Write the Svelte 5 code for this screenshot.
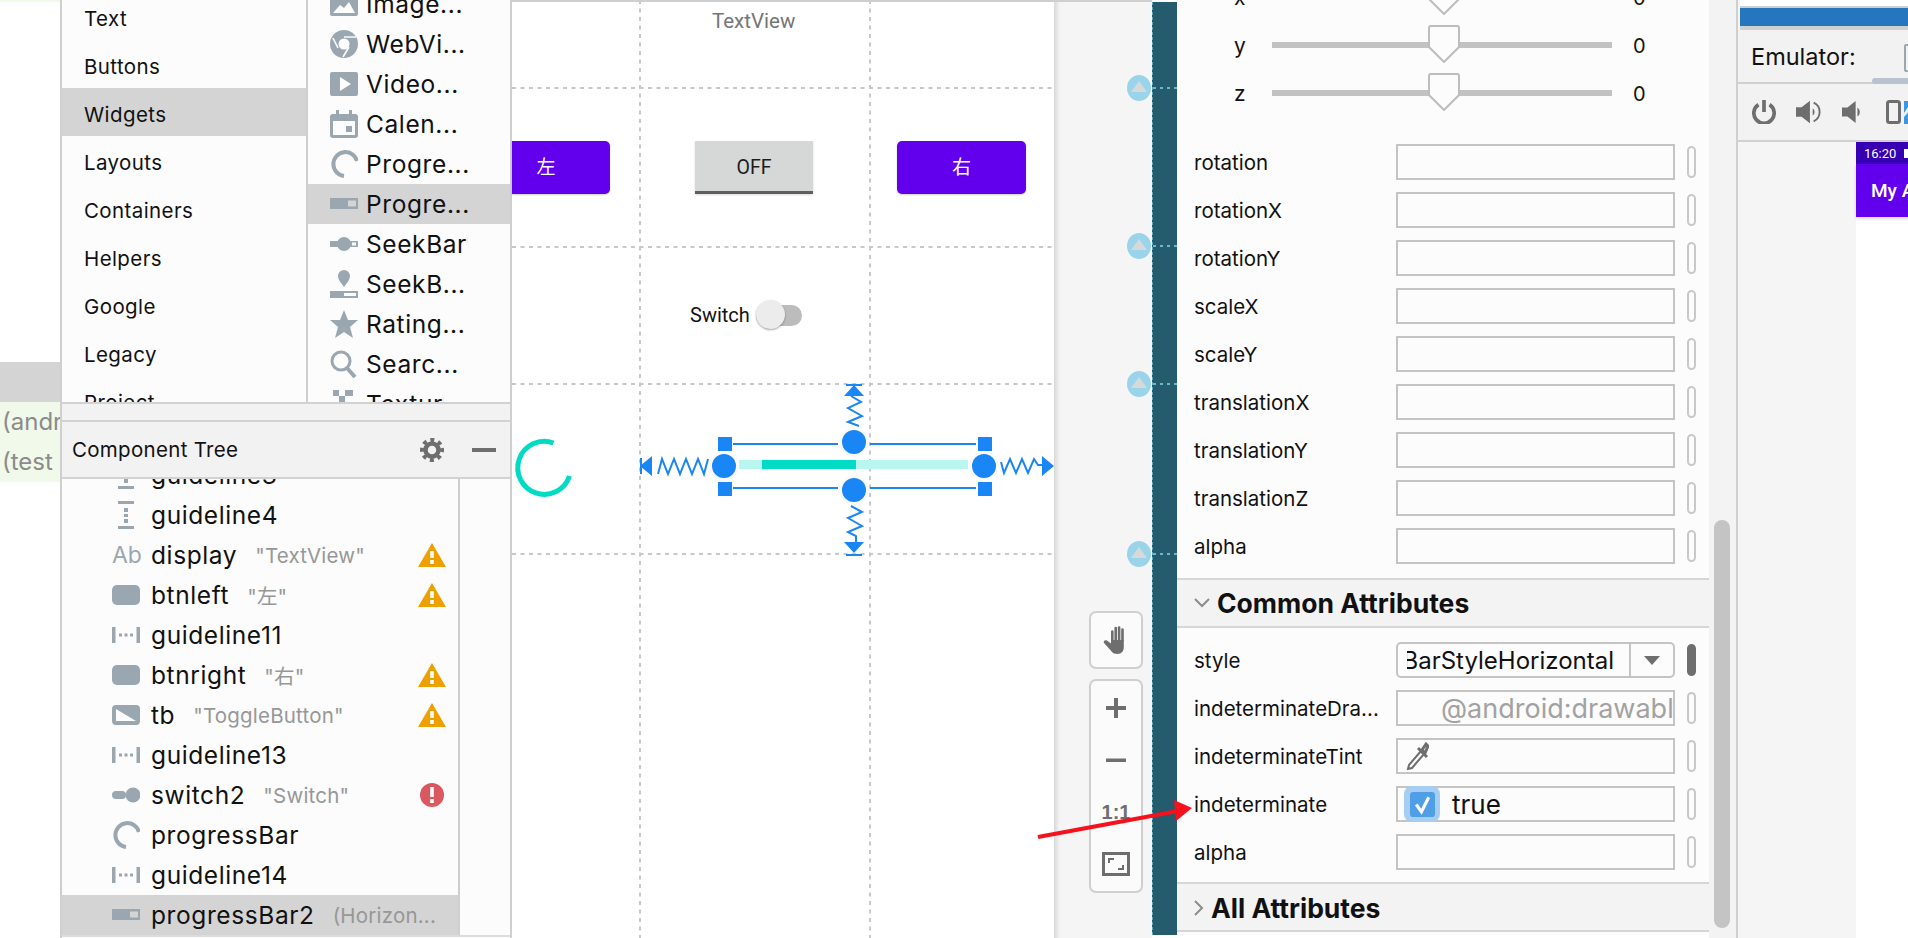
<script>
  const categories = ['Text', 'Buttons', 'Widgets', 'Layouts', 'Containers', 'Helpers', 'Google', 'Legacy', 'Project'];
  const widgets = [
    ['image', 'Image...'], ['web', 'WebVi...'], ['video', 'Video...'], ['calendar', 'Calen...'], ['spin', 'Progre...'],
    ['hbar', 'Progre...'], ['seek', 'SeekBar'], ['seekd', 'SeekB...'], ['star', 'Rating...'], ['search', 'Searc...'], ['texture', 'Textur...'],
  ];
  const tree = [
    ['guidev', 'guideline3', '', ''],
    ['guidev', 'guideline4', '', ''],
    ['ab', 'display', '"TextView"', 'warn'],
    ['btn', 'btnleft', '"左"', 'warn'],
    ['guideh', 'guideline11', '', ''],
    ['btn', 'btnright', '"右"', 'warn'],
    ['toggle', 'tb', '"ToggleButton"', 'warn'],
    ['guideh', 'guideline13', '', ''],
    ['switch', 'switch2', '"Switch"', 'error'],
    ['spin', 'progressBar', '', ''],
    ['guideh', 'guideline14', '', ''],
    ['hbar', 'progressBar2', '(Horizon...', ''],
  ];
  const sliders = ['x', 'y', 'z'];
  const transforms = ['rotation', 'rotationX', 'rotationY', 'scaleX', 'scaleY', 'translationX', 'translationY', 'translationZ', 'alpha'];
  const markers = [88, 246, 384, 554];
</script>

{#snippet icon(name)}
  <svg class="ico" viewBox="0 0 28 28" fill="#9aa7b0">
    {#if name === 'image'}
      <path d="M2 2h24a2 2 0 0 1 2 2v20a2 2 0 0 1-2 2H2a2 2 0 0 1-2-2V4a2 2 0 0 1 2-2zM3 23h22l-6-11-5 6-4-3z" fill-rule="evenodd" />
    {:else if name === 'web'}
      <circle cx="14" cy="14" r="14" />
      <circle cx="14" cy="14" r="5.5" fill="#fcfcfc" />
      <path d="M14 7h12M8 18L3 8M19 17l-6 10" stroke="#fcfcfc" stroke-width="1.6" fill="none" />
    {:else if name === 'video'}
      <path d="M2 2h24a2 2 0 0 1 2 2v20a2 2 0 0 1-2 2H2a2 2 0 0 1-2-2V4a2 2 0 0 1 2-2zM10 7v14l11-7z" fill-rule="evenodd" />
    {:else if name === 'calendar'}
      <path d="M6 0h3v4h10V0h3v4h3a3 3 0 0 1 3 3v18a3 3 0 0 1-3 3H3a3 3 0 0 1-3-3V7a3 3 0 0 1 3-3h3zM3 11v14h22V11z" fill-rule="evenodd" />
      <rect x="16" y="16" width="6" height="6" />
    {:else if name === 'spin'}
      <path d="M27 11A12 12 0 1 0 14 26" fill="none" stroke="#9aa7b0" stroke-width="4" />
    {:else if name === 'hbar'}
      <path d="M0 8h28v11H0zM18 10.500v6h8v-6z" fill-rule="evenodd" />
    {:else if name === 'seek'}
      <path d="M0 11h8v6H0zM20 11h8v6h-8zM22 12.500v3h4v-3z" fill-rule="evenodd" />
      <circle cx="14" cy="14" r="7" />
    {:else if name === 'seekd'}
      <path d="M14 0a6 6 0 0 1 6 6c0 4-4 8-6 11-2-3-6-7-6-11a6 6 0 0 1 6-6z" />
      <path d="M0 21h28v7H0zM14 23v3h12v-3z" fill-rule="evenodd" />
    {:else if name === 'star'}
      <path d="M14 0l4 10h10l-8 7 3 11-9-6-9 6 3-11-8-7h10z" />
    {:else if name === 'search'}
      <circle cx="11" cy="11" r="9" fill="none" stroke="#9aa7b0" stroke-width="3" />
      <path d="M17 18l8 9" stroke="#9aa7b0" stroke-width="4" />
    {:else if name === 'texture'}
      <path d="M3 0h6v6H3zM15 0h8v6h-8zM9 6h6v6H9z" />
    {:else if name === 'guidev'}
      <path d="M6 0h16v3H6zM6 25h16v3H6zM12 7h4v4h-4zM12 13h4v3h-4zM12 18h4v4h-4z" />
    {:else if name === 'guideh'}
      <path d="M0 6h3.500v16H0zM24.500 6H28v16h-3.500zM7 12.500h3v3H7zM12.500 12.500h3v3h-3zM18 12.500h3v3h-3z" />
    {:else if name === 'btn'}
      <rect x="0" y="4" width="28" height="20" rx="5" />
    {:else if name === 'toggle'}
      <path d="M4 4h20a4 4 0 0 1 4 4v12a4 4 0 0 1-4 4H4a4 4 0 0 1-4-4V8a4 4 0 0 1 4-4zM4 8v12h20z" fill-rule="evenodd" />
    {:else if name === 'switch'}
      <rect x="0" y="10" width="14" height="8" rx="4" />
      <circle cx="21" cy="14" r="7.500" />
    {/if}
  </svg>
{/snippet}

<div class="app">
  <div class="sliver">
    <div class="sel"></div>
    <div class="diff">
      <span>(andr</span>
      <span>(test</span>
    </div>
  </div>

  <div class="left">
    <div class="palette">
      <div class="cats">
        {#each categories as c}
          <div class="cat" class:on={c === 'Widgets'}>{c}</div>
        {/each}
      </div>
      <div class="widgets">
        {#each widgets as w, i}
          <div class="widget" class:on={i === 5}>
            {@render icon(w[0])}
            <span>{w[1]}</span>
          </div>
        {/each}
      </div>
    </div>
    <div class="strip"></div>
    <div class="tree-head">
      <span>Component Tree</span>
      <svg class="gear" viewBox="0 0 24 24" fill="none" stroke="#6e6e6e">
        <circle cx="12" cy="12" r="6.500" stroke-width="4.500" />
        <circle cx="12" cy="12" r="10" stroke-width="4" stroke-dasharray="3.900 3.950" transform="rotate(-11 12 12)" />
      </svg>
      <i class="dash"></i>
    </div>
    <div class="tree-wrap">
      <div class="tree">
        {#each tree as t, i}
          <div class="node" class:on={i === 11}>
            {#if t[0] === 'ab'}
              <b class="ab">Ab</b>
            {:else}
              {@render icon(t[0])}
            {/if}
            <span class="name">{t[1]}</span>
            {#if t[2]}<span class="hint">{t[2]}</span>{/if}
            {#if t[3] === 'warn'}
              <svg class="status" viewBox="0 0 28 24">
                <path d="M14 0l14 24H0z" fill="#eea000" />
                <path d="M12.200 8h3.600v7h-3.600zM12.200 17h3.600v4h-3.600z" fill="#fff" />
              </svg>
            {:else if t[3] === 'error'}
              <svg class="status" viewBox="0 0 28 24">
                <circle cx="14" cy="12" r="12" fill="#db5860" />
                <path d="M12.200 4h3.600v10h-3.600zM12.200 16h3.600v4h-3.600z" fill="#fff" />
              </svg>
            {/if}
          </div>
        {/each}
      </div>
    </div>
  </div>

  <div class="canvas">
    <svg class="overlay" viewBox="512 0 542 938">
      <g stroke="#c8c8c8" stroke-width="2" stroke-dasharray="4 4.500">
        <path d="M640 0V938M870 0V938" />
        <path d="M512 88H1054M512 247H1054M512 384H1054M512 554H1054" />
      </g>
      <path d="M553.500 443A26.500 26.500 0 1 0 569.500 476" fill="none" stroke="#00dbc6" stroke-width="5" />
      <rect x="739" y="460" width="229" height="9" fill="#b9f6ef" />
      <rect x="762" y="460" width="94" height="9" fill="#00dbc6" />
      <g stroke="#1a86f5" fill="none" stroke-width="2">
        <path d="M733 444H838M870 444H976M733 488H838M870 488H976" />
        <path d="M708 459l-4 15-6-15-6 15-6-15-6 15-6-15-6 15-6-15-4 15" />
        <path d="M1001 462l3 11 6-14 6 14 6-14 6 14 6-14 4 6h8" />
        <path d="M851 396l10 6-13 6 14 8-14 6 11 4" />
        <path d="M851 506l11 6-14 6 14 8-14 6 8 4v6" />
        <path d="M846 385h16M846 555h16M641 458v16" />
      </g>
      <g fill="#1a86f5">
        <rect x="718" y="437" width="14" height="14" />
        <rect x="978" y="437" width="14" height="14" />
        <rect x="718" y="482" width="14" height="14" />
        <rect x="978" y="482" width="14" height="14" />
        <path d="M640 466l12-10v20zM1054 466l-12-10v20zM854 385l10 11h-20zM854 553l10-11h-20z" />
      </g>
      <g fill="#1a86f5" stroke="#fafafa" stroke-width="3">
        <circle cx="724" cy="466" r="13.500" />
        <circle cx="984" cy="466" r="13.500" />
        <circle cx="854" cy="442" r="13.500" />
        <circle cx="854" cy="490" r="13.500" />
      </g>
    </svg>
    <div class="tv">TextView</div>
    <div class="mbtn lbtn">左</div>
    <div class="toggle">OFF</div>
    <div class="mbtn rbtn">右</div>
    <div class="sw">
      <span>Switch</span>
      <div class="track"><i></i></div>
    </div>
  </div>

  <div class="rail">
    {#each markers as y}
      <svg class="marker" style="top:{y - 13}px" viewBox="0 0 24 26">
        <ellipse cx="12" cy="13" rx="12" ry="13" fill="#9ad4ea" />
        <path d="M12 6l8 11H4z" fill="#d6d9da" />
      </svg>
    {/each}
    <div class="tools hand">
      <svg viewBox="0 0 26 28" width="26" height="28" fill="#6e6e6e">
        <path d="M8 15V5.500a1.300 1.300 0 0 1 2.600 0V15zM11.400 15V2a1.300 1.300 0 0 1 2.600 0v13zM14.800 15V1.500a1.300 1.300 0 0 1 2.600 0V15zM18.200 15V3.500a1.300 1.300 0 0 1 2.600 0V15z" />
        <path d="M8 14h12.800v7c0 4-2 7-6.500 7-3 0-5-1-6.500-3.500L1 17c-1-2 1-3.500 3-2.500l4 3z" />
      </svg>
    </div>
    <div class="tools zoom">
      <svg viewBox="0 0 24 24" width="24" height="24" fill="#6e6e6e"><path d="M10 2h4v8h8v4h-8v8h-4v-8H2v-4h8z" /></svg>
      <svg viewBox="0 0 24 24" width="24" height="24" fill="#6e6e6e"><path d="M2 10.500h20v3.500H2z" /></svg>
      <b>1:1</b>
      <svg viewBox="0 0 28 24" width="28" height="24" fill="none" stroke="#6e6e6e" stroke-width="3">
        <rect x="1.500" y="1.500" width="25" height="21" />
        <path d="M7 11V7h5M21 13v4h-5" stroke-width="2" />
      </svg>
    </div>
  </div>

  <div class="teal">
    {#each markers as y}
      <i style="top:{y - 1}px"></i>
    {/each}
  </div>

  <div class="attrs">
    <div class="sliders">
      {#each sliders as s}
        <div class="slider">
          <span class="axis">{s}</span>
          <div class="rule">
            <svg class="thumb" viewBox="0 0 32 38">
              <path d="M3 1h26a2 2 0 0 1 2 2v19L16 37 1 22V3a2 2 0 0 1 2-2z" fill="#fcfcfc" stroke="#bdbdbd" stroke-width="2" />
            </svg>
          </div>
          <span class="val">0</span>
        </div>
      {/each}
    </div>

    <div class="group">
      {#each transforms as name}
        <div class="row">
          <span class="lbl">{name}</span>
          <div class="field"></div>
          <i class="pill"></i>
        </div>
      {/each}
    </div>

    <div class="sec first">
      <svg viewBox="0 0 16 10" width="16" height="10" fill="none" stroke="#8c8c8c" stroke-width="2"><path d="M1 1l7 7 7-7" /></svg>
      <span>Common Attributes</span>
    </div>

    <div class="group common">
      <div class="row">
        <span class="lbl">style</span>
        <div class="field combo">
          <div class="clip"><span>progressBarStyleHorizontal</span></div>
          <div class="drop"><i></i></div>
        </div>
        <i class="pill fill"></i>
      </div>
      <div class="row">
        <span class="lbl">indeterminateDra...</span>
        <div class="field ghost">@android:drawable/progress_indeterminate</div>
        <i class="pill"></i>
      </div>
      <div class="row">
        <span class="lbl">indeterminateTint</span>
        <div class="field picker">
          <svg viewBox="0 0 24 30" width="24" height="30" fill="none" stroke="#6e6e6e">
            <path d="M16 10L4 24l-1 4 4-1 12-14z" stroke-width="2" />
            <path d="M13 7l9 9M17 9l4-6 2 2-3 7z" stroke-width="3" />
          </svg>
        </div>
        <i class="pill"></i>
      </div>
      <div class="row">
        <span class="lbl">indeterminate</span>
        <div class="field check">
          <div class="halo">
            <svg viewBox="0 0 24 24" width="25" height="25">
              <rect width="24" height="24" rx="3" fill="#4f9fe6" />
              <path d="M6 12l5 7 7-14" fill="none" stroke="#fff" stroke-width="3" />
            </svg>
          </div>
          <span>true</span>
        </div>
        <i class="pill"></i>
      </div>
      <div class="row">
        <span class="lbl">alpha</span>
        <div class="field"></div>
        <i class="pill"></i>
      </div>
    </div>

    <div class="sec">
      <svg viewBox="0 0 10 16" width="10" height="18" fill="none" stroke="#8c8c8c" stroke-width="2"><path d="M1 1l7 7-7 7" /></svg>
      <span>All Attributes</span>
    </div>
  </div>

  <div class="scrollstrip"><i></i></div>

  <div class="emu">
    <div class="emu-top"></div>
    <div class="emu-blue"></div>
    <div class="emu-head">
      <span>Emulator:</span>
      <i class="tab"></i>
      <i class="hscroll"></i>
    </div>
    <div class="emu-tools">
      <svg viewBox="0 0 26 26" width="24" height="24" fill="none" stroke="#6e6e6e" stroke-width="4">
        <path d="M13 0v13M7 5a11 11 0 1 0 12 0" />
      </svg>
      <svg viewBox="0 0 28 24" width="26" height="24" fill="#6e6e6e">
        <path d="M0 7h6l9-7v24l-9-7H0z" />
        <path d="M19 2a11 11 0 0 1 0 20" stroke="#6e6e6e" stroke-width="2" fill="none" />
        <path d="M18 8a5 5 0 0 1 0 8z" />
      </svg>
      <svg viewBox="0 0 22 24" width="20" height="24" fill="#6e6e6e">
        <path d="M0 7h6l9-7v24l-9-7H0z" />
        <path d="M17 7a6 6 0 0 1 0 10z" />
      </svg>
      <svg class="rot" viewBox="0 0 40 24" width="40" height="24">
        <rect x="1.500" y="1.500" width="12" height="21" rx="2" fill="none" stroke="#6e6e6e" stroke-width="3" />
        <path d="M18 13L26 1h-8zM18 24V17L26 8v16z" fill="#3b97e3" />
      </svg>
    </div>
    <div class="stage">
      <div class="phone">
        <div class="status-bar"><span>16:20</span><i></i></div>
        <div class="app-bar">My App</div>
      </div>
    </div>
  </div>

  <svg class="arrow" viewBox="0 0 1908 938">
    <path d="M1038 837L1178 811" stroke="#f5121d" stroke-width="4" />
    <path d="M1192 808L1174 800L1176 821z" fill="#f5121d" />
  </svg>
</div>

<style>
  :global(body) {
    margin: 0;
    background: #fff;
  }
  .app {
    position: relative;
    display: flex;
    width: 1908px;
    height: 938px;
    overflow: hidden;
    font-family: Inter, "Noto Sans CJK SC", sans-serif;
    color: #111;
    background: #fff;
  }
  .sliver {
    width: 60px;
    flex: none;
    padding-top: 360px;
    box-sizing: border-box;
    border-top: 2px solid #f1f9e9;
    overflow: hidden;
  }
  .sel {
    height: 40px;
    background: #d4d4d4;
  }
  .diff {
    height: 80px;
    background: #f1f9ea;
    color: #8b8b8b;
    font-size: 24px;
    overflow: hidden;
    white-space: nowrap;
  }
  .diff span {
    display: block;
    height: 40px;
    line-height: 40px;
    padding-left: 2px;
  }
  .left {
    width: 452px;
    flex: none;
    box-sizing: border-box;
    border-left: 2px solid #cfcfcf;
    border-right: 2px solid #cfcfcf;
    background: #fcfcfc;
    display: flex;
    flex-direction: column;
  }
  .palette {
    height: 402px;
    display: flex;
    overflow: hidden;
    flex: none;
  }
  .cats {
    width: 244px;
    flex: none;
    border-right: 2px solid #cfcfcf;
    margin-top: -8px;
  }
  .cat {
    height: 48px;
    line-height: 53px;
    padding-left: 22px;
    font-size: 20.500px;
    letter-spacing: 0.4px;
  }
  .on {
    background: #d4d4d4;
  }
  .widgets {
    flex: 1;
    margin-top: -16px;
  }
  .widget {
    height: 40px;
    display: flex;
    align-items: center;
    padding-left: 22px;
    gap: 8px;
    font-size: 24.500px;
    letter-spacing: 0.6px;
    white-space: nowrap;
  }
  .ico {
    width: 28px;
    height: 28px;
    flex: none;
  }
  .strip {
    height: 16px;
    flex: none;
    background: #f2f2f2;
    border-top: 2px solid #d2d2d2;
    border-bottom: 2px solid #d2d2d2;
  }
  .tree-head {
    height: 57px;
    flex: none;
    box-sizing: border-box;
    background: #f2f2f2;
    border-bottom: 2px solid #d2d2d2;
    display: flex;
    align-items: center;
    padding-left: 10px;
    font-size: 20.500px;
    letter-spacing: 0.3px;
  }
  .gear {
    width: 24px;
    height: 24px;
    margin-left: auto;
  }
  .dash {
    width: 24px;
    height: 4px;
    background: #6e6e6e;
    margin: 0 14px 0 28px;
  }
  .tree-wrap {
    height: 456px;
    flex: none;
    overflow: hidden;
    border-bottom: 2px solid #dcdcdc;
  }
  .tree {
    width: 396px;
    height: 456px;
    border-right: 2px solid #cfcfcf;
  }
  .node {
    height: 40px;
    display: flex;
    align-items: center;
    padding-left: 50px;
    position: relative;
    top: -24px;
    font-size: 24.500px;
    letter-spacing: 0.6px;
    white-space: nowrap;
  }
  .name {
    margin-left: 11px;
  }
  .hint {
    margin-left: 18px;
    color: #979797;
    font-size: 20.500px;
    letter-spacing: 0.2px;
  }
  .ab {
    width: 28px;
    flex: none;
    font-weight: 400;
    color: #9aa7b0;
    font-size: 23px;
    letter-spacing: 0;
  }
  .status {
    position: absolute;
    left: 356px;
    top: 8px;
    width: 28px;
    height: 24px;
  }
  .canvas {
    position: relative;
    width: 542px;
    flex: none;
    box-sizing: border-box;
    background: #fff;
    font-family: Roboto, "Noto Sans CJK SC", sans-serif;
  }
  .canvas::before {
    content: "";
    position: absolute;
    left: 0;
    right: 0;
    top: 0;
    height: 2px;
    background: #cfcfcf;
    z-index: 2;
  }
  .overlay {
    position: absolute;
    inset: 0;
    width: 542px;
    height: 938px;
  }
  .tv {
    position: absolute;
    left: 200px;
    top: 9px;
    font-size: 20.500px;
    color: #757575;
  }
  .mbtn {
    position: absolute;
    top: 141px;
    height: 53px;
    line-height: 53px;
    background: #6200ee;
    color: #fff;
    font-size: 19px;
    text-align: center;
    box-shadow: 0 1px 2px rgba(0, 0, 0, 0.2);
  }
  .lbtn {
    left: 0;
    width: 98px;
    border-radius: 0 5px 5px 0;
    box-sizing: border-box;
    padding-right: 30px;
  }
  .rbtn {
    left: 385px;
    width: 129px;
    border-radius: 5px;
  }
  .toggle {
    position: absolute;
    left: 183px;
    top: 141px;
    width: 118px;
    height: 53px;
    box-sizing: border-box;
    background: #d6d7d7;
    border-bottom: 3px solid #5f5f5f;
    text-align: center;
    line-height: 53px;
    font-size: 19.500px;
    color: #1c1c1c;
    box-shadow: 0 1px 2px rgba(0, 0, 0, 0.15);
  }
  .sw {
    position: absolute;
    left: 178px;
    top: 300px;
    display: flex;
    align-items: center;
    gap: 6px;
    height: 30px;
    font-size: 20px;
  }
  .track {
    position: relative;
    width: 46px;
    height: 21px;
    margin-left: 0;
    border-radius: 11px;
    background: #bcbcbc;
  }
  .track i {
    position: absolute;
    left: 0;
    top: -5px;
    width: 29px;
    height: 29px;
    border-radius: 50%;
    background: #ececec;
    box-shadow: 0 1px 2px rgba(0, 0, 0, 0.35);
  }
  .rail {
    position: relative;
    width: 98px;
    flex: none;
    box-sizing: border-box;
    background: linear-gradient(90deg, #d8d8d8, #f5f5f5 6px);
    border-top: 2px solid #cfcfcf;
    padding: 609px 0 0 35px;
  }
  .marker {
    position: absolute;
    left: 72.500px;
    width: 24px;
    height: 26px;
    margin-top: -2px;
  }
  .tools {
    width: 54px;
    box-sizing: border-box;
    background: #fbfbfb;
    border: 2px solid #cfcfcf;
    border-radius: 7px;
    display: flex;
    flex-direction: column;
    align-items: center;
  }
  .hand {
    height: 58px;
    justify-content: center;
  }
  .zoom {
    height: 214px;
    margin-top: 10px;
    padding: 15px 0 0;
    gap: 28px;
  }
  .zoom b {
    height: 24px;
    line-height: 24px;
    font-size: 20px;
    color: #6e6e6e;
    font-family: "Liberation Sans", sans-serif;
  }
  .teal {
    position: relative;
    width: 25px;
    flex: none;
    margin: 2px 0 3px;
    box-sizing: border-box;
    background: #245b6d;
    border-left: 1px dashed #5fa8bc;
  }
  .teal i {
    position: absolute;
    left: 0;
    right: 0;
    margin-top: -2px;
    height: 2px;
    background: repeating-linear-gradient(90deg, #6cb7cb 0 3px, transparent 3px 7px);
  }
  .attrs {
    width: 532px;
    flex: none;
    height: 935px;
    background: #fcfcfc;
    overflow: hidden;
    font-size: 20.500px;
  }
  .sliders {
    margin-top: -27px;
  }
  .slider {
    height: 48px;
    display: flex;
    align-items: center;
    padding-left: 57px;
  }
  .axis {
    width: 38px;
    font-size: 21px;
  }
  .rule {
    position: relative;
    width: 340px;
    height: 6px;
    background: #c2c2c2;
  }
  .thumb {
    position: absolute;
    left: 156px;
    top: -17px;
    width: 32px;
    height: 38px;
  }
  .val {
    margin-left: 21px;
    font-size: 20px;
    padding-top: 2px;
  }
  .group {
    margin-top: 21px;
    padding-bottom: 8px;
  }
  .group.common {
    margin: 0;
    padding: 8px 0 6px;
  }
  .row {
    height: 48px;
    display: flex;
    align-items: center;
    padding-left: 17px;
    white-space: nowrap;
  }
  .lbl {
    width: 202px;
    flex: none;
  }
  .field {
    width: 279px;
    height: 36px;
    flex: none;
    box-sizing: border-box;
    border: 2px solid #c4c4c4;
    overflow: hidden;
    display: flex;
    align-items: center;
  }
  .pill {
    width: 9px;
    height: 32px;
    margin-left: 12px;
    box-sizing: border-box;
    border: 2px solid #c8c8c8;
    border-radius: 5px;
  }
  .pill.fill {
    background: #6e6e6e;
    border-color: #6e6e6e;
  }
  .sec {
    height: 50px;
    box-sizing: border-box;
    display: flex;
    align-items: center;
    gap: 7px;
    padding-left: 17px;
    background: #f3f3f3;
    border-bottom: 2px solid #d6d6d6;
    font-size: 26.500px;
    font-weight: 700;
  }
  .sec.first {
    border-top: 2px solid #d6d6d6;
  }
  .sec + .group + .sec {
    border-top: 2px solid #d6d6d6;
    padding-top: 2px;
  }
  .combo {
    border-radius: 5px;
  }
  .clip {
    width: 222px;
    margin-left: 9px;
    overflow: hidden;
    display: flex;
    justify-content: flex-end;
    font-size: 24px;
    flex: none;
  }
  .clip span {
    flex: none;
    padding-right: 15px;
  }
  .drop {
    flex: 1;
    height: 100%;
    border-left: 2px solid #c4c4c4;
    display: flex;
    align-items: center;
    justify-content: center;
  }
  .drop i {
    border-left: 8px solid transparent;
    border-right: 8px solid transparent;
    border-top: 9px solid #6e6e6e;
  }
  .ghost {
    padding-left: 43px;
    color: #a2a2a2;
    font-size: 27px;
  }
  .picker {
    padding-left: 7px;
  }
  .check {
    font-size: 26px;
    gap: 12px;
    overflow: visible;
    padding-left: 6px;
  }
  .halo {
    width: 36px;
    height: 36px;
    flex: none;
    border-radius: 8px;
    background: #a6cdf3;
    display: flex;
    align-items: center;
    justify-content: center;
  }
  .scrollstrip {
    position: relative;
    width: 29px;
    flex: none;
    box-sizing: border-box;
    background: #f3f3f3;
    border-right: 2px solid #cfcfcf;
    padding: 520px 5px 10px 5px;
  }
  .scrollstrip i {
    display: block;
    width: 16px;
    height: 408px;
    border-radius: 8px;
    background: #c4c4c4;
  }
  .emu {
    flex: 1;
    min-width: 0;
    display: flex;
    flex-direction: column;
    background: #f5f5f5;
  }
  .emu-top {
    height: 6px;
    background: #fff;
    border-bottom: 2px solid #cfcfcf;
    margin-left: 2px;
  }
  .emu-blue {
    height: 18px;
    background: #2675bf;
    margin-left: 2px;
    border-bottom: 4px solid #d0d0d0;
  }
  .emu-head {
    position: relative;
    height: 52px;
    flex: none;
    display: flex;
    align-items: center;
    padding-left: 13px;
    font-size: 23.500px;
    background: #f2f2f2;
    border-bottom: 2px solid #d0d0d0;
  }
  .tab {
    position: absolute;
    left: 166px;
    top: 14px;
    width: 12px;
    height: 24px;
    border: 2px solid #9aa7b0;
    border-radius: 2px;
  }
  .hscroll {
    position: absolute;
    left: 134px;
    top: 48px;
    width: 60px;
    height: 6px;
    border-radius: 3px;
    background: #b9c3cf;
  }
  .emu-tools {
    height: 56px;
    flex: none;
    display: flex;
    align-items: center;
    gap: 20px;
    padding-left: 14px;
    background: #f2f2f2;
    border-bottom: 2px solid #d0d0d0;
    white-space: nowrap;
    overflow: hidden;
  }
  .emu-tools svg {
    flex: none;
  }
  .emu-tools .rot {
    margin-left: 4px;
  }
  .stage {
    flex: 1;
    padding-left: 118px;
    overflow: hidden;
  }
  .phone {
    width: 100px;
    height: 100%;
    background: #fff;
    color: #fff;
  }
  .status-bar {
    height: 22px;
    background: #3700b3;
    display: flex;
    align-items: center;
    padding-left: 8px;
    gap: 8px;
    font-size: 13px;
    font-family: Roboto, sans-serif;
  }
  .status-bar i {
    width: 9px;
    height: 9px;
    background: #fff;
  }
  .app-bar {
    height: 53px;
    line-height: 53px;
    padding-left: 15px;
    background: #6200ee;
    font-size: 19px;
    font-weight: 500;
    font-family: Roboto, sans-serif;
    box-shadow: 0 2px 3px rgba(0, 0, 0, 0.15);
    white-space: nowrap;
  }
  .arrow {
    position: absolute;
    inset: 0;
    width: 1908px;
    height: 938px;
    pointer-events: none;
  }
</style>
